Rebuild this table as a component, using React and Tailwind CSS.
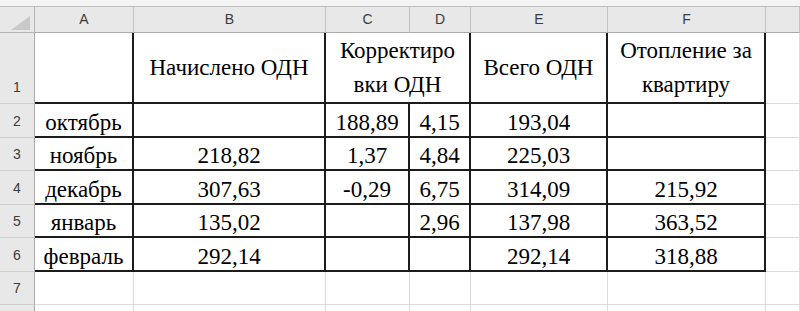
import React from 'react';

const cols = ['A', 'B', 'C', 'D', 'E', 'F', ''];

const rows = [
  ['октябрь', '', '188,89', '4,15', '193,04', ''],
  ['ноябрь', '218,82', '1,37', '4,84', '225,03', ''],
  ['декабрь', '307,63', '-0,29', '6,75', '314,09', '215,92'],
  ['январь', '135,02', '', '2,96', '137,98', '363,52'],
  ['февраль', '292,14', '', '', '292,14', '318,88'],
];

const hdr = "bg-[#e8e8e8] text-[#3c3c3c] text-[14px] font-['Liberation_Sans','DejaVu_Sans',Arial,sans-serif]";
const rowHdr = `${hdr} border-r border-b border-r-[#a9a9a9] border-b-[#cdcdcd] flex items-end justify-center pb-[5px]`;
const cell = "border-r-2 border-b-2 border-[#1c1c1c] flex items-end justify-center leading-[24px] text-[23px] text-black font-['Liberation_Serif','Times_New_Roman','DejaVu_Serif','Noto_Serif',Times,serif]";
const grid = "border-r border-b border-[#dcdcdc]";

const App = () => {
  return (
    <div className="w-[800px] h-[311px] overflow-hidden bg-white">
      <div className="grid grid-cols-[35px_99px_192px_84px_61px_137px_158px_34px] grid-rows-[7px_26px_71px_34px_33px_34px_33px_34px_33px_10px]">
        {/* top strip */}
        <div className="col-span-8 bg-[#f4f4f4] border-b border-[#bdbdbd]" />

        {/* column headers */}
        <div className="relative bg-[#e8e8e8] border-r border-b border-[#b5b5b5]">
          <svg className="absolute left-[11px] top-[9px]" width="19" height="14" viewBox="0 0 19 14">
            <polygon points="19,0 19,14 0,14" fill="#c9c9c9" />
          </svg>
        </div>
        {cols.map((c, i) => (
          <div key={i} className={`${hdr} border-r border-b border-r-[#c3c3c3] border-b-[#a9a9a9] flex items-center justify-center`}>
            {c}
          </div>
        ))}

        {/* row 1 */}
        <div className={rowHdr}>1</div>
        <div className={cell} />
        <div className={`${cell} !items-center`}>Начислено ОДН</div>
        <div className={`${cell} col-span-2 !items-center !leading-[34px] text-center`}>Корректиро<br />вки ОДН</div>
        <div className={`${cell} !items-center`}>Всего ОДН</div>
        <div className={`${cell} !items-center !leading-[34px] text-center`}>Отопление за<br />квартиру</div>
        <div className={grid} />

        {/* rows 2-6 */}
        {rows.map((r, i) => (
          <React.Fragment key={i}>
            <div className={rowHdr}>{i + 2}</div>
            {r.map((v, j) => (
              <div key={j} className={`${cell} pb-[1px]`}>{v}</div>
            ))}
            <div className={grid} />
          </React.Fragment>
        ))}

        {/* row 7 */}
        <div className={rowHdr}>7</div>
        {cols.map((c, i) => (
          <div key={i} className={grid} />
        ))}

        {/* row 8 */}
        <div className={`${hdr} border-r border-[#a9a9a9]`} />
        {cols.map((c, i) => (
          <div key={i} className={grid} />
        ))}
      </div>
    </div>
  );
};

export default App;
